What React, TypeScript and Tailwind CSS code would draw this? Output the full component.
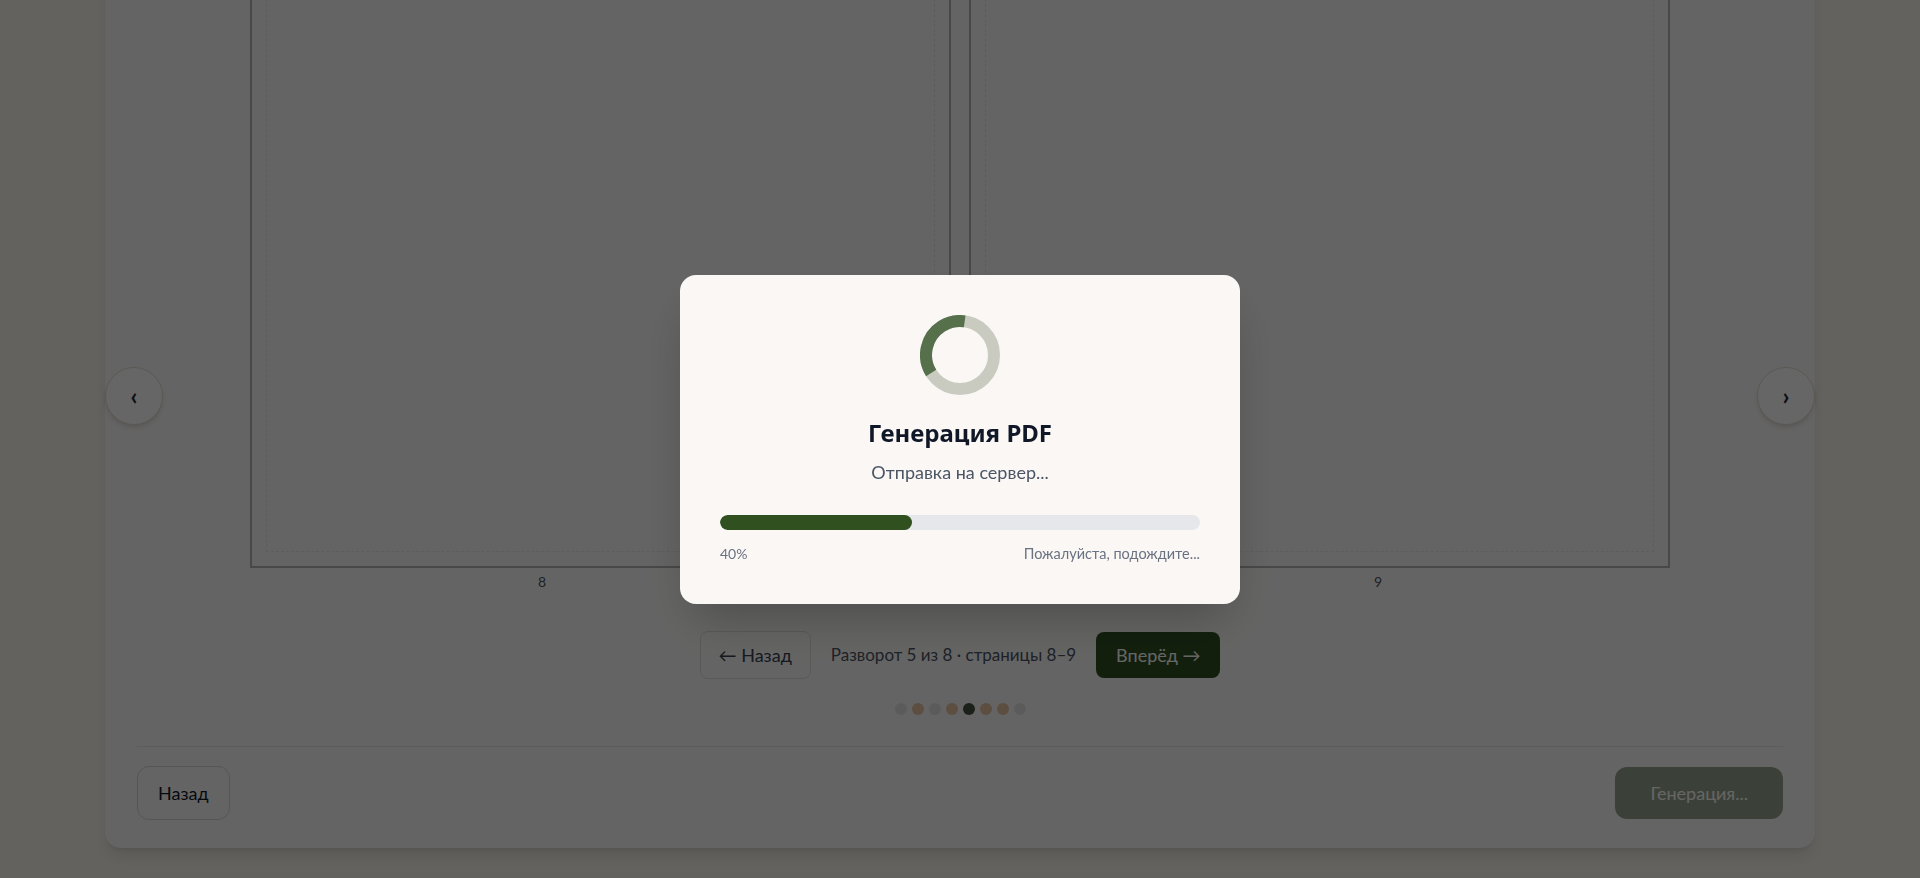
const dots = ["bg-[#e4e4e4]", "bg-[#e6c2a0]", "bg-[#e4e4e4]", "bg-[#e6c2a0]", "bg-[#44503e]", "bg-[#e6c2a0]", "bg-[#e6c2a0]", "bg-[#e4e4e4]"];

function Page({ number, side }: { number: number; side: "left" | "right" }) {
  return (
    <div className="flex flex-col w-[701px]">
      <div className="relative h-[990px] border-2 border-[#b4b4b4] bg-[#fbf9f9]">
        <div className="absolute inset-[14px] border border-dashed border-[#ece8e6]"></div>
      </div>
      <div className={`mt-1 text-sm leading-5 text-gray-600 text-center ${side === "left" ? "pr-[117px]" : "pl-[117px]"}`}>
        {number}
      </div>
    </div>
  );
}

function Spinner() {
  return (
    <svg width="80" height="80" viewBox="0 0 80 80" className="mx-auto block">
      <circle cx="40" cy="40" r="34" fill="none" stroke="#c9cbc1" strokeWidth="12" />
      <circle
        cx="40"
        cy="40"
        r="34"
        fill="none"
        stroke="#55704b"
        strokeWidth="12"
        strokeDasharray="77 137"
        transform="rotate(148 40 40)"
      />
    </svg>
  );
}

export default function App() {
  return (
    <div className="h-[878px] overflow-hidden bg-[#f7f5ec] flex flex-col justify-end [font-family:Lato,'Noto_Sans',sans-serif]">
      {/* Editor card (scrolled to bottom) */}
      <div className="relative w-[1710px] mx-auto mb-[30px] bg-[#fdfbfa] rounded-b-2xl shadow-lg px-8 pb-7">
        <div className="flex justify-center gap-[18px]">
          <Page number={8} side="left" />
          <Page number={9} side="right" />
        </div>

        <button className="absolute left-0 bottom-[423px] w-[58px] h-[58px] rounded-full bg-white border border-[#e6dccf] shadow-md flex items-center justify-center text-2xl font-bold text-gray-800">
          ‹
        </button>
        <button className="absolute right-0 bottom-[423px] w-[58px] h-[58px] rounded-full bg-white border border-[#e6dccf] shadow-md flex items-center justify-center text-2xl font-bold text-gray-800">
          ›
        </button>

        {/* Spread navigation */}
        <div className="mt-[39px] flex items-center justify-center gap-5">
          <button className="px-[18px] py-[9px] rounded-lg border border-[#e2dfdb] text-lg leading-7 text-gray-700">
            ← Назад
          </button>
          <span className="text-[17px] leading-7 text-gray-600">Разворот 5 из 8 · страницы 8–9</span>
          <button className="px-5 py-[9px] rounded-lg bg-[#2f4f22] text-lg leading-7 text-white">
            Вперёд →
          </button>
        </div>

        <div className="mt-6 flex justify-center gap-[5px]">
          {dots.map((c, i) => (
            <span key={i} className={`w-3 h-3 rounded-full ${c}`}></span>
          ))}
        </div>

        {/* Footer */}
        <div className="mt-[31px] pt-[19px] border-t border-[#e9e6e4] flex items-center justify-between">
          <button className="px-5 py-3 rounded-xl border border-[#d9d5d2] text-lg leading-7 text-gray-900">
            Назад
          </button>
          <button className="px-[35px] py-3 rounded-xl bg-[#2f4f22] opacity-50 text-lg leading-7 text-white">
            Генерация...
          </button>
        </div>
      </div>

      {/* PDF generation modal */}
      <div className="fixed inset-0 bg-black/60 flex items-center justify-center">
        <div className="w-[560px] bg-[#faf7f5] rounded-2xl shadow-2xl p-10 text-center">
          <Spinner />
          <h2 className="mt-[22px] text-2xl leading-8 font-bold text-gray-900 [font-family:'Noto_Sans',sans-serif]">
            Генерация PDF
          </h2>
          <p className="mt-[9px] text-lg leading-7 text-gray-600">Отправка на сервер...</p>
          <div className="mt-[29px] h-[15px] rounded-full bg-gray-200 overflow-hidden">
            <div className="h-full rounded-full bg-[#30501f]" style={{ width: "40%" }}></div>
          </div>
          <div className="mt-[14px] flex justify-between text-sm leading-5 text-gray-500">
            <span>40%</span>
            <span className="text-[14.5px]">Пожалуйста, подождите...</span>
          </div>
        </div>
      </div>
    </div>
  );
}
